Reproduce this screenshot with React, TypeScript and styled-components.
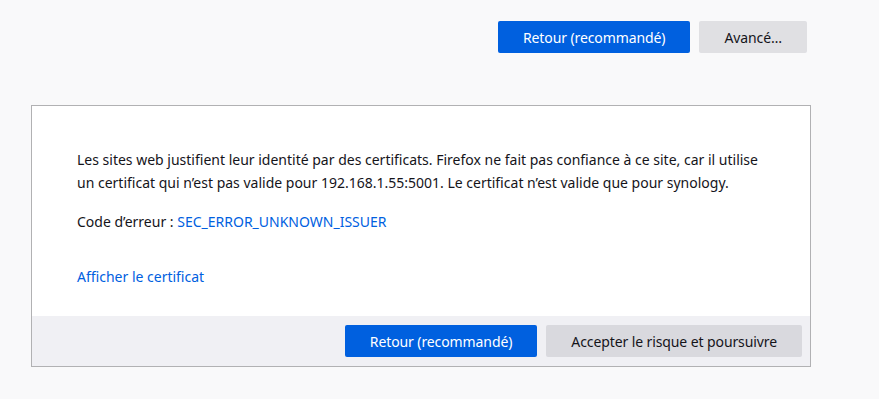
import styled, { createGlobalStyle } from "styled-components";

const GlobalStyle = createGlobalStyle`
  body {
    margin: 0;
    background: #f9f9fa;
    font-family: "Noto Sans", "Open Sans", sans-serif;
    color: #15141a;
  }
`;

const Page = styled.div`
  width: 879px;
  height: 399px;
  padding-left: 31px;
  box-sizing: border-box;
  overflow: hidden;
`;

const TopBar = styled.div`
  width: 776px;
  display: flex;
  justify-content: flex-end;
  gap: 9px;
  padding-top: 21px;
`;

const Button = styled.button<{ $primary?: boolean; $shade?: string }>`
  height: 32px;
  padding: 0 25px;
  border: none;
  border-radius: 2px;
  font-family: inherit;
  font-size: 14px;
  letter-spacing: -0.1px;
  background: ${(p) => (p.$primary ? "#0060df" : p.$shade || "#e0e0e3")};
  color: ${(p) => (p.$primary ? "#ffffff" : "#15141a")};
  cursor: pointer;
`;

const Panel = styled.div`
  margin-top: 52px;
  width: 780px;
  border: 1px solid #b1b1b3;
  box-sizing: border-box;
  background: #ffffff;
`;

const Body = styled.div`
  padding: 42px 45px 28px;
  font-size: 14px;
  line-height: 23px;
`;

const Text = styled.p`
  margin: 0 0 16px;
  width: 700px;
`;

const Link = styled.a`
  color: #0060df;
  text-decoration: none;
`;

const LinkRow = styled.div`
  margin-top: 32px;
`;

const Footer = styled.div`
  background: #f0f0f4;
  display: flex;
  justify-content: flex-end;
  gap: 9px;
  padding: 9px 8px 9px 0;
`;

export default function App() {
  return (
    <Page>
      <GlobalStyle />
      <TopBar>
        <Button $primary>Retour (recommandé)</Button>
        <Button>Avancé…</Button>
      </TopBar>
      <Panel>
        <Body>
          <Text>
            Les sites web justifient leur identité par des certificats. Firefox ne fait pas confiance à ce site, car il utilise
            un certificat qui n’est pas valide pour 192.168.1.55:5001. Le certificat n’est valide que pour synology.
          </Text>
          <Text>
            Code d’erreur : <Link href="#">SEC_ERROR_UNKNOWN_ISSUER</Link>
          </Text>
          <LinkRow>
            <Link href="#">Afficher le certificat</Link>
          </LinkRow>
        </Body>
        <Footer>
          <Button $primary>Retour (recommandé)</Button>
          <Button $shade="#d9d9de">Accepter le risque et poursuivre</Button>
        </Footer>
      </Panel>
    </Page>
  );
}
